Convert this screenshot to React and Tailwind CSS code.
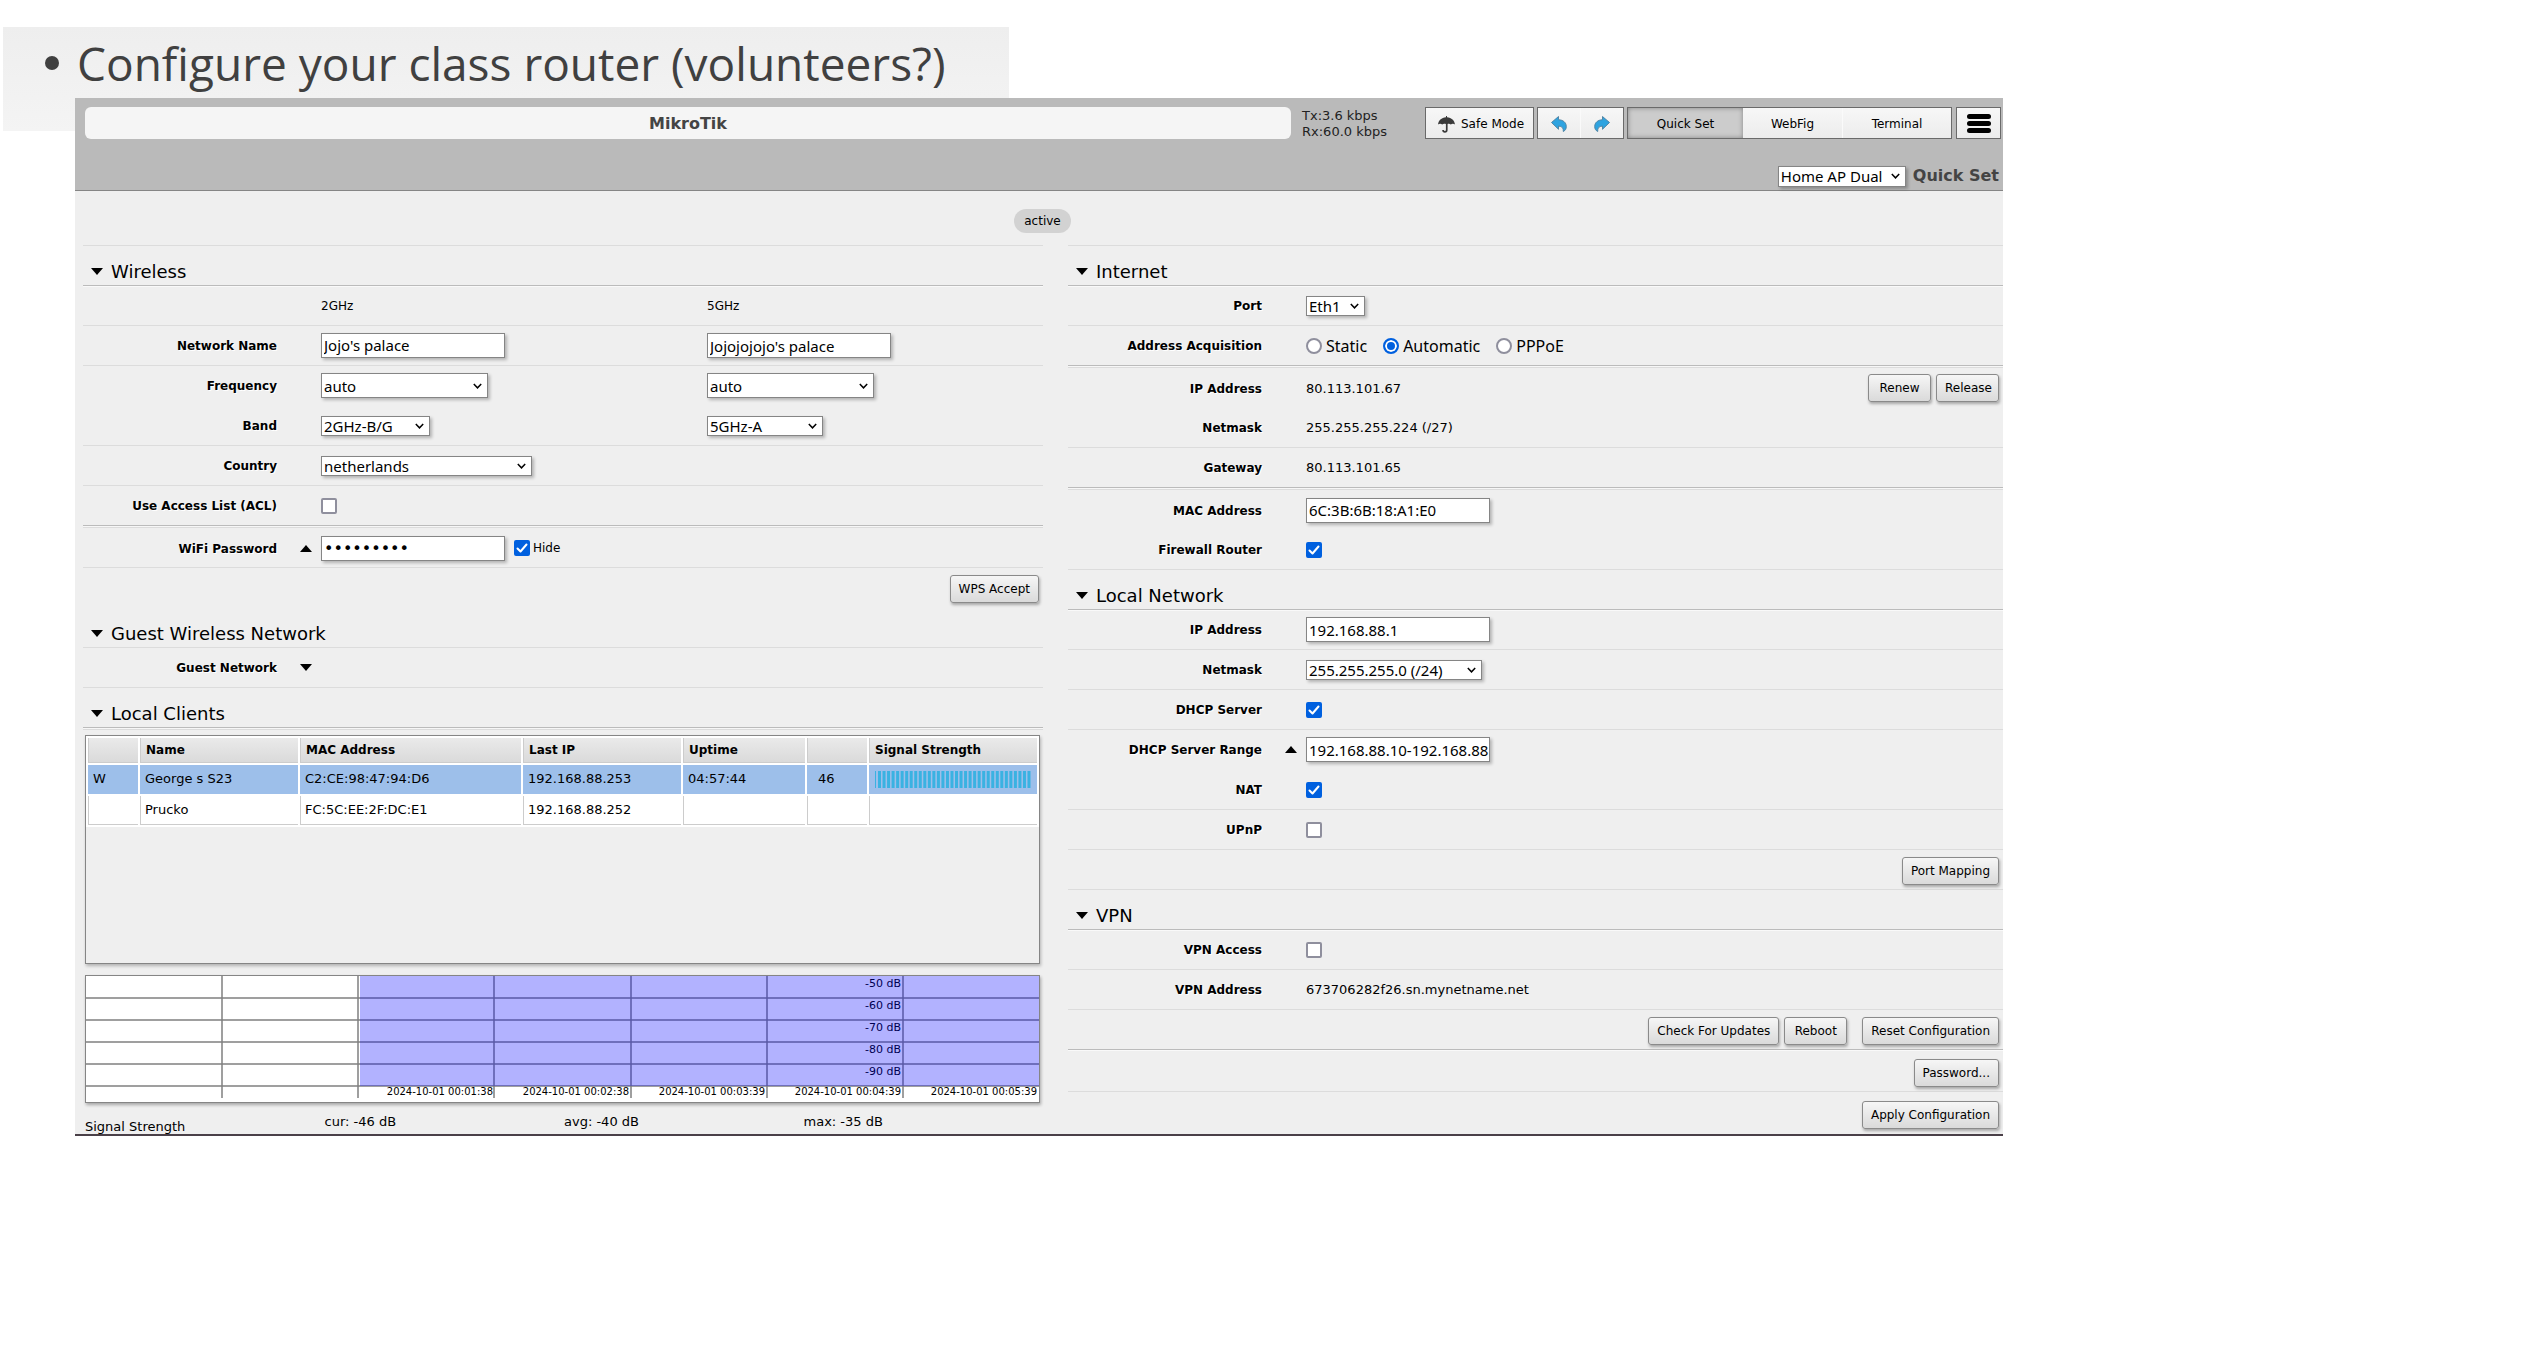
import React from "react";

const SANS = "font-['DejaVu_Sans',sans-serif]";
const FIELD_FONT = "font-['Noto_Sans',sans-serif] text-[15px] leading-[18px] text-black";

const LINES = {
  none: "border-transparent",
  light: "border-[#dcdcdc]",
  strong: "border-[#bbbbbb] shadow-[0_1px_0_#f9f9f9]",
  double: "border-[#bbbbbb] shadow-[0_1px_0_#f7f7f7,0_2px_0_#dcdcdc]",
};

function Triangle({ up }) {
  return (
    <svg className="block h-[7px] w-[12px] shrink-0" viewBox="0 0 12 7" aria-hidden="true">
      <path d={up ? "M0 7 6 0l6 7z" : "M0 0h12L6 7z"} fill="#000" />
    </svg>
  );
}

function Heading({ children, line = "strong" }) {
  return (
    <div className={`flex h-10 items-center gap-2 border-b pt-3 pl-2 ${LINES[line]}`}>
      <Triangle />
      <h2 className="text-[18px] leading-6">{children}</h2>
    </div>
  );
}

function Row({ label, htmlFor, arrow, line = "light", tall, children }) {
  const Label = htmlFor ? "label" : "span";
  return (
    <div className={`flex items-center border-b ${tall ? "h-[42px] pt-[3px]" : "h-10"} ${LINES[line]}`}>
      <Label
        htmlFor={htmlFor}
        className="w-[194px] shrink-0 pt-px text-right text-[12px] leading-4 font-bold [text-shadow:1px_1px_0_#fff]"
      >
        {label}
      </Label>
      <div className="flex w-11 shrink-0 justify-end pr-[9px]">
        {arrow && <Triangle up={arrow === "up"} />}
      </div>
      <div className="flex grow items-center">{children}</div>
    </div>
  );
}

function Value({ children }) {
  return <span className="grow pt-px text-[13px] leading-4">{children}</span>;
}

function Actions({ line = "light", tall, children }) {
  return (
    <div className={`flex items-center justify-end gap-[5px] border-b pr-1 ${tall ? "h-[42px] pt-1" : "h-10 pt-0.5"} ${LINES[line]}`}>
      {children}
    </div>
  );
}

function Button({ className = "", children }) {
  return (
    <button
      type="button"
      className={`h-7 rounded-[3px] border border-[#8a8a8a] bg-linear-to-b from-[#f6f6f6] to-[#dadada] px-2 text-[12px] leading-4 whitespace-nowrap shadow-[1px_2px_3px_rgba(0,0,0,0.3)] ${className}`}
    >
      {children}
    </button>
  );
}

const BOX = "border border-[#858585] bg-white pl-[2px] shadow-[2px_2px_3px_rgba(0,0,0,0.25)]";

function TextBox({ id, label, value, type = "text" }) {
  const font = type === "password" ? "font-['DejaVu_Sans',sans-serif] text-[16px] text-black" : FIELD_FONT;
  return (
    <input
      id={id}
      aria-label={label}
      type={type}
      defaultValue={value}
      className={`h-[25px] w-[184px] ${BOX} ${font}`}
    />
  );
}

function Select({ id, label, value, size }) {
  return (
    <div className={`relative ${size}`}>
      <select
        id={id}
        aria-label={label}
        defaultValue={value}
        className={`block h-full w-full appearance-none ${BOX} ${FIELD_FONT}`}
      >
        <option>{value}</option>
      </select>
      <svg className="pointer-events-none absolute inset-y-0 right-1.5 my-auto h-[6px] w-[9px]" viewBox="0 0 9 6" aria-hidden="true">
        <path d="M.8 1 4.500 4.800 8.200 1" fill="none" stroke="#000" strokeWidth="1.500" />
      </svg>
    </div>
  );
}

function Check({ id, label, checked }) {
  return (
    <span className="relative block size-4">
      <input
        id={id}
        aria-label={label}
        type="checkbox"
        defaultChecked={checked}
        className="peer block size-4 appearance-none rounded-[2px] border-2 border-[#8f8f9d] bg-white checked:border-[#0060df] checked:bg-[#0060df]"
      />
      <svg className="pointer-events-none absolute inset-0 hidden size-4 peer-checked:block" viewBox="0 0 16 16" aria-hidden="true">
        <path d="M3.500 8.500 6.500 11.500 12.500 4.500" fill="none" stroke="#fff" strokeWidth="2" strokeLinecap="round" strokeLinejoin="round" />
      </svg>
    </span>
  );
}

function Radio({ label, checked }) {
  return (
    <label className="flex items-center gap-1 font-['Noto_Sans',sans-serif] text-[16px] leading-[18px]">
      <input
        type="radio"
        name="acquisition"
        defaultChecked={checked}
        className="size-4 appearance-none rounded-full border-2 border-[#8f8f9d] bg-white checked:border-[#0060df] checked:bg-[#0060df] checked:shadow-[inset_0_0_0_2px_#fff]"
      />
      {label}
    </label>
  );
}

function Umbrella() {
  return (
    <svg className="size-[17px]" viewBox="0 0 17 17" aria-hidden="true">
      <path d="M8 0h1v1.200C13.500 1.500 16.700 4.600 17 8.500c-1-1-3-1.200-4.200 0-1-1-2.200-1.100-3.200-.4V14a2.700 2.700 0 0 1-5.400 0h1.700a1 1 0 0 0 2 0V8.100C6.500 7.400 5.200 7.500 4.200 8.500 3 7.300 1 7.500 0 8.500.3 4.600 3.500 1.500 8 1.200z" fill="#3a3a3a" />
    </svg>
  );
}

function Curve({ flip }) {
  return (
    <svg className={flip ? "size-4 -scale-x-100" : "size-4"} viewBox="0 0 16 16" aria-hidden="true">
      <path d="M.5 6.500 7.500.5v3.200c4.800.2 7.800 3 7.800 6.800 0 2.400-1 4-3 5 .3-3.600-1.300-5.200-4.800-5.400v3.200z" fill="#2ea3e0" stroke="#4a7f9f" strokeWidth=".9" strokeLinejoin="round" />
    </svg>
  );
}

const BAR = "h-8 border border-[#6a6a6a] bg-linear-to-b from-[#f7f7f7] to-[#ececec] text-[12px] leading-4";

function Header() {
  return (
    <header className="border-b border-[#858585] bg-[#bababa] pt-[9px] pr-0.5 pb-[3px]">
      <div className="flex h-8 items-center pl-[10px]">
        <h1 className="flex h-8 grow items-center justify-center rounded-md bg-[#f5f5f5] pt-0.5 text-[16px] font-bold text-[#444]">
          MikroTik
        </h1>
        <div className="w-[134px] shrink-0 pt-0.5 pl-[11px] text-[13px] leading-4 whitespace-nowrap text-[#222]">
          <p>Tx:3.6 kbps</p>
          <p>Rx:60.0 kbps</p>
        </div>
        <button type="button" className={`flex w-[109px] shrink-0 items-center gap-1.5 pt-0.5 pl-3 whitespace-nowrap ${BAR}`}>
          <Umbrella />
          Safe Mode
        </button>
        <div className={`ml-[3px] grid w-[87px] shrink-0 grid-cols-2 ${BAR}`}>
          <button type="button" aria-label="Undo" className="grid place-items-center border-r border-[#fafafa] pt-0.5">
            <Curve />
          </button>
          <button type="button" aria-label="Redo" className="grid place-items-center pt-0.5">
            <Curve flip />
          </button>
        </div>
        <nav className={`ml-[3px] flex w-[325px] shrink-0 ${BAR}`}>
          <button type="button" className="w-[115px] bg-[#cccccc] pt-0.5 shadow-[inset_0_0_5px_rgba(0,0,0,0.35)]">Quick Set</button>
          <button type="button" className="w-[100px] border-r border-[#fafafa] pt-0.5">WebFig</button>
          <button type="button" className="grow pt-0.5">Terminal</button>
        </nav>
        <button type="button" aria-label="Menu" className={`ml-1 grid w-[45px] shrink-0 place-items-center ${BAR}`}>
          <svg className="h-[19px] w-6" viewBox="0 0 24 19" aria-hidden="true">
            <path d="M2.500 2.500h19M2.500 9.500h19M2.500 16.500h19" stroke="#000" strokeWidth="5" strokeLinecap="round" />
          </svg>
        </button>
      </div>
      <div className="flex items-center justify-end gap-[7px] pt-[26px] pr-0.5">
        <Select label="Mode" value="Home AP Dual" size="h-[21px] w-[128px]" />
        <p className="text-[16px] leading-[22px] font-bold text-[#444]">Quick Set</p>
      </div>
    </header>
  );
}

const TH = "h-[25px] border-b border-l border-[#cccccc] bg-linear-to-b from-[#eaeaea] to-[#dadada] pl-[5px] text-left text-[12px] font-bold";

function Clients() {
  const head = ["", "Name", "MAC Address", "Last IP", "Uptime", "", "Signal Strength"];
  const rows = [
    { on: true, cells: ["W", "George s S23", "C2:CE:98:47:94:D6", "192.168.88.253", "04:57:44", "46"] },
    { on: false, cells: ["", "Prucko", "FC:5C:EE:2F:DC:E1", "192.168.88.252", "", ""] },
  ];
  return (
    <div className="mr-[3px] ml-0.5 h-[229px] border border-[#858585] shadow-[1px_2px_3px_rgba(0,0,0,0.25)]">
      <table className="w-full table-fixed border-separate border-spacing-x-[2px] border-spacing-y-[2px] bg-white">
        <colgroup>
          <col className="w-[50px]" />
          <col className="w-[158px]" />
          <col className="w-[221px]" />
          <col className="w-[158px]" />
          <col className="w-[122px]" />
          <col className="w-[60px]" />
          <col />
        </colgroup>
        <thead>
          <tr>
            {head.map((text, i) => (
              <th key={i} className={TH}>{text}</th>
            ))}
          </tr>
        </thead>
        <tbody>
          {rows.map((row, r) => (
            <tr key={r}>
              {row.cells.map((text, i) => (
                <td
                  key={i}
                  className={`h-[29px] border-b border-l text-[13px] leading-4 ${i === 5 ? "pl-[10px]" : "pl-1"} ${row.on ? "border-[#9dbfea] bg-[#9dbfea]" : "border-[#cccccc]"}`}
                >
                  {text}
                </td>
              ))}
              <td className={`border-b border-l pl-[5px] ${row.on ? "border-[#9dbfea] bg-[#9dbfea]" : "border-[#cccccc]"}`}>
                {row.on && <SignalBar />}
              </td>
            </tr>
          ))}
        </tbody>
      </table>
    </div>
  );
}

function SignalBar() {
  return (
    <svg className="block h-[17px] w-[157px]" viewBox="0 0 157 17" aria-hidden="true">
      <rect x="0" width="1" height="17" fill="#3ab2e2" />
      {Array.from({ length: 34 }, (_, i) => (
        <rect key={i} x={3 + i * 4.53} width="3" height="17" fill="#3ab2e2" />
      ))}
    </svg>
  );
}

function Chart() {
  const xs = [136, 272, 408, 545, 681, 817];
  const ys = [22, 44, 66, 88, 110];
  const db = ["-50 dB", "-60 dB", "-70 dB", "-80 dB", "-90 dB"];
  const times = ["00:01:38", "00:02:38", "00:03:39", "00:04:39", "00:05:39"];
  return (
    <div className="mt-[11px] mr-[3px] ml-0.5 border border-[#858585] bg-white shadow-[1px_2px_3px_rgba(0,0,0,0.3)]">
      <svg className="block w-full" viewBox="0 0 953 126" role="img" aria-label="Signal strength history">
        <g fill="none" stroke="#7f7f7f" strokeWidth="1.500">
          {xs.map((x) => (
            <path key={x} d={`M${x} 0V122`} />
          ))}
          {ys.map((y) => (
            <path key={y} d={`M0 ${y}H953`} />
          ))}
        </g>
        <g fill="#000" fontFamily="DejaVu Sans" textAnchor="end">
          {db.map((text, i) => (
            <text key={text} x="815" y={11 + i * 22} fontSize="11">{text}</text>
          ))}
          {times.map((text, i) => (
            <text key={text} x={407 + i * 136} y="119" fontSize="10">{`2024-10-01 ${text}`}</text>
          ))}
        </g>
        <rect x="274" y="0" width="679" height="110" fill="#0000ff" opacity=".3" />
      </svg>
    </div>
  );
}

function LeftColumn() {
  return (
    <section className="border-t border-[#dcdcdc]">
      <Heading>Wireless</Heading>
      <Row>
        <span className="w-[386px] pt-px text-[12px]">2GHz</span>
        <span className="pt-px text-[12px]">5GHz</span>
      </Row>
      <Row label="Network Name" htmlFor="ssid">
        <div className="w-[386px]"><TextBox id="ssid" value="Jojo's palace" /></div>
        <TextBox label="5GHz network name" value="Jojojojojo's palace" />
      </Row>
      <Row label="Frequency" htmlFor="freq" line="none">
        <div className="w-[386px]"><Select id="freq" value="auto" size="h-[25px] w-[167px]" /></div>
        <Select label="5GHz frequency" value="auto" size="h-[25px] w-[167px]" />
      </Row>
      <Row label="Band" htmlFor="band">
        <div className="w-[386px]"><Select id="band" value="2GHz-B/G" size="h-5 w-[109px]" /></div>
        <Select label="5GHz band" value="5GHz-A" size="h-5 w-[116px]" />
      </Row>
      <Row label="Country" htmlFor="country">
        <Select id="country" value="netherlands" size="h-5 w-[211px]" />
      </Row>
      <Row label="Use Access List (ACL)" htmlFor="acl" line="double">
        <Check id="acl" />
      </Row>
      <Row label="WiFi Password" htmlFor="password" arrow="up" tall>
        <TextBox id="password" type="password" value="palace123" />
        <div className="flex items-center gap-[3px] pl-[9px]">
          <Check id="hide" checked />
          <label htmlFor="hide" className="text-[12px]">Hide</label>
        </div>
      </Row>
      <Actions line="none"><Button>WPS Accept</Button></Actions>
      <Heading line="light">Guest Wireless Network</Heading>
      <Row label="Guest Network" arrow="down" />
      <Heading line="double">Local Clients</Heading>
      <div className="pt-[7px]">
        <Clients />
        <Chart />
        <div className="ml-0.5 grid h-[31px] grid-cols-4 text-[13px] leading-[14px]">
          <span className="pt-[17px]">Signal Strength</span>
          <span className="pt-3">cur: -46 dB</span>
          <span className="pt-3">avg: -40 dB</span>
          <span className="pt-3">max: -35 dB</span>
        </div>
      </div>
    </section>
  );
}

function RightColumn() {
  return (
    <section className="border-t border-[#dcdcdc]">
      <Heading>Internet</Heading>
      <Row label="Port" htmlFor="port"><Select id="port" value="Eth1" size="h-5 w-[59px]" /></Row>
      <Row label="Address Acquisition" line="double">
        <div className="flex gap-4">
          <Radio label="Static" />
          <Radio label="Automatic" checked />
          <Radio label="PPPoE" />
        </div>
      </Row>
      <Row label="IP Address" line="none" tall>
        <Value>80.113.101.67</Value>
        <div className="flex gap-[5px] pr-1">
          <Button className="w-[63px]">Renew</Button>
          <Button className="w-[63px]">Release</Button>
        </div>
      </Row>
      <Row label="Netmask"><Value>255.255.255.224 (/27)</Value></Row>
      <Row label="Gateway" line="double"><Value>80.113.101.65</Value></Row>
      <Row label="MAC Address" htmlFor="mac" line="none" tall><TextBox id="mac" value="6C:3B:6B:18:A1:E0" /></Row>
      <Row label="Firewall Router" htmlFor="firewall"><Check id="firewall" checked /></Row>
      <Heading>Local Network</Heading>
      <Row label="IP Address" htmlFor="lan"><TextBox id="lan" value="192.168.88.1" /></Row>
      <Row label="Netmask" htmlFor="mask"><Select id="mask" value="255.255.255.0 (/24)" size="h-5 w-[176px]" /></Row>
      <Row label="DHCP Server" htmlFor="dhcp"><Check id="dhcp" checked /></Row>
      <Row label="DHCP Server Range" htmlFor="range" arrow="up" line="none">
        <TextBox id="range" value="192.168.88.10-192.168.88" />
      </Row>
      <Row label="NAT" htmlFor="nat"><Check id="nat" checked /></Row>
      <Row label="UPnP" htmlFor="upnp"><Check id="upnp" /></Row>
      <Actions><Button>Port Mapping</Button></Actions>
      <Heading>VPN</Heading>
      <Row label="VPN Access" htmlFor="vpn"><Check id="vpn" /></Row>
      <Row label="VPN Address"><Value>673706282f26.sn.mynetname.net</Value></Row>
      <Actions line="strong">
        <Button>Check For Updates</Button>
        <Button className="w-[63px]">Reboot</Button>
        <Button className="ml-[10px]">Reset Configuration</Button>
      </Actions>
      <Actions tall><Button>Password...</Button></Actions>
      <Actions tall line="none"><Button>Apply Configuration</Button></Actions>
    </section>
  );
}

export default function App() {
  return (
    <div className="min-h-screen bg-white pt-[27px]">
      <div className="ml-[3px] h-[104px] w-[1006px] bg-linear-to-b from-[#eeeeee] to-[#f4f4f4] pl-[42px]">
        <ul className="pt-1 font-['Open_Sans',sans-serif] text-[46px] leading-[64px] whitespace-nowrap text-[#404040]">
          <li className="flex items-center gap-[18px]">
            <span className="size-[14px] rounded-full bg-[#404040]" />
            Configure your class router (volunteers?)
          </li>
        </ul>
      </div>
      <main className={`relative -mt-[33px] mr-[543px] ml-[75px] border-b-2 border-[#4a4048] bg-[#efefef] text-black ${SANS}`}>
        <Header />
        <div className="flex h-[54px] items-center justify-center pt-1.5 pl-[7px]">
          <span className="rounded-full bg-[#d2d2d2] px-[10px] py-1 text-[12px] leading-4">active</span>
        </div>
        <div className="grid grid-cols-[960fr_935fr] gap-x-[25px] pl-2">
          <LeftColumn />
          <RightColumn />
        </div>
      </main>
    </div>
  );
}
